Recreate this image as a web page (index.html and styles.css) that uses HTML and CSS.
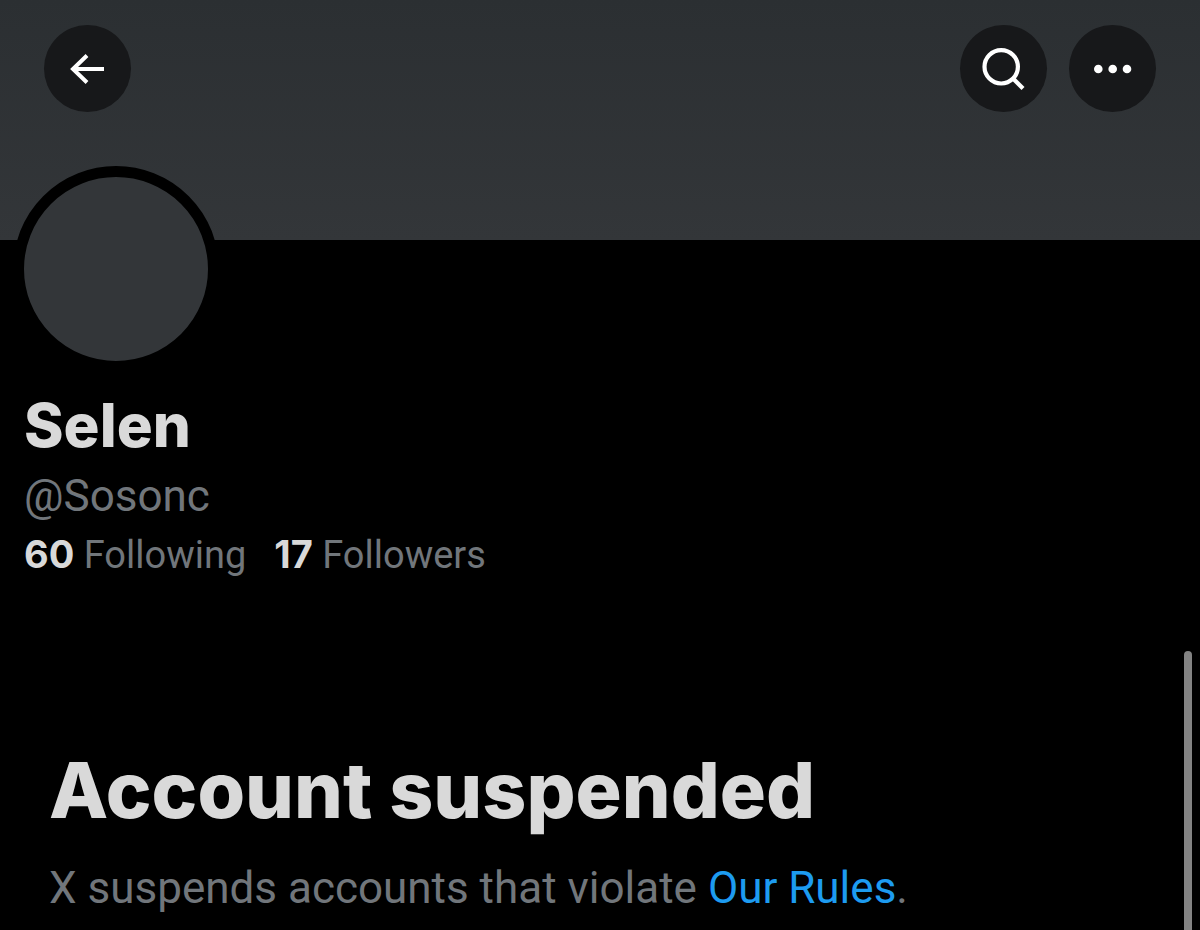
FILE: index.html
```html
<!DOCTYPE html>
<html lang="en">
<head>
  <meta charset="UTF-8" />
  <meta name="viewport" content="width=device-width, initial-scale=1.0" />
  <title>Selen (@Sosonc) / X</title>
  <link rel="stylesheet" href="styles.css">
</head>
<body>
  <header class="banner">
    <button type="button" class="icon-btn" aria-label="Back">
      <svg viewBox="0 0 87 87" fill="none" stroke="#fff" stroke-width="4">
        <path d="M60 44H28.500M43 30.500L29 44L43 57.500" />
      </svg>
    </button>
    <div class="actions">
      <button type="button" class="icon-btn" aria-label="Search">
        <svg viewBox="0 0 87 87" fill="none" stroke="#fff" stroke-width="4.200">
          <circle cx="41.200" cy="41.800" r="16.700" />
          <path d="M53 53.500L63 63.500" />
        </svg>
      </button>
      <button type="button" class="icon-btn" aria-label="More">
        <svg viewBox="0 0 87 87" fill="#fff">
          <circle cx="29.300" cy="44" r="4.300" />
          <circle cx="43.700" cy="44" r="4.300" />
          <circle cx="58" cy="44" r="4.300" />
        </svg>
      </button>
    </div>
  </header>

  <main>
    <section class="profile">
      <div class="avatar"></div>
      <h1 class="name">Selen</h1>
      <p class="handle">@Sosonc</p>
      <div class="stats">
        <a href="#"><b>60</b> Following</a>
        <a href="#"><b>17</b> Followers</a>
      </div>
    </section>

    <section class="notice">
      <h2>Account suspended</h2>
      <p>X suspends accounts that violate <a href="#">Our Rules</a>.</p>
    </section>
  </main>

  <div class="scroll-thumb"></div>
</body>
</html>
```
FILE: styles.css
```css
* {
  box-sizing: border-box;
}
body {
  position: relative;
  min-height: 100vh;
  margin: 0;
  background: #000;
  color: #d9d9d9;
  font-family: Inter, sans-serif;
}
h1, h2, p {
  margin: 0;
}
a {
  color: inherit;
  text-decoration: none;
}
.banner {
  display: flex;
  justify-content: space-between;
  align-items: flex-start;
  height: 240px;
  padding: 25px 44px;
  background: linear-gradient(#2b2f32, #333639);
}
.actions {
  display: flex;
  gap: 22px;
}
.icon-btn {
  width: 87px;
  height: 87px;
  padding: 0;
  border: none;
  border-radius: 50%;
  background: #17181a;
  cursor: pointer;
}
.icon-btn svg {
  display: block;
  width: 100%;
}
.profile {
  padding: 0 24px;
}
.avatar {
  width: 206px;
  height: 206px;
  margin: -74px 0 0 -11px;
  border: 11px solid #000;
  border-radius: 50%;
  background: #333639;
}
.name {
  margin-top: 15px;
  font-size: 60px;
  line-height: 76px;
  font-weight: 800;
}
.handle {
  margin-top: 5px;
  color: #71767b;
  font-family: Roboto, sans-serif;
  font-size: 44px;
  line-height: 56px;
}
.stats {
  display: flex;
  gap: 28px;
  margin-top: 2px;
  color: #71767b;
  font-family: Roboto, sans-serif;
  font-size: 38px;
  line-height: 56px;
}
.stats b {
  color: #d9d9d9;
  font-family: Inter, sans-serif;
}
.notice {
  padding: 159px 49px 0;
}
.notice h2 {
  font-size: 77px;
  line-height: 96px;
  font-weight: 800;
}
.notice p {
  margin-top: 22px;
  color: #71767b;
  font-family: Roboto, sans-serif;
  font-size: 44px;
  line-height: 56px;
}
.notice a {
  color: #1d9bf0;
}
.scroll-thumb {
  position: absolute;
  top: 651px;
  right: 8px;
  bottom: 0;
  width: 8px;
  border-radius: 4px 4px 0 0;
  background: #838383;
}
```
